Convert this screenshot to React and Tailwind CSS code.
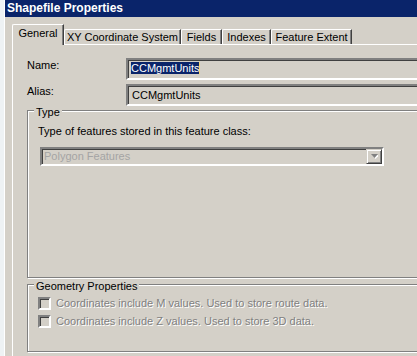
import React from "react";

const tabs = [
  { label: "XY Coordinate System", w: "w-[117px]" },
  { label: "Fields", w: "w-[41px]" },
  { label: "Indexes", w: "w-[49px]" },
  { label: "Feature Extent", w: "w-[81px]" },
];

const sunken =
  "border-2 border-t-[#808080] border-l-[#808080] border-b-white border-r-white shadow-[inset_1px_1px_0_#404040]";
const etched =
  "border border-[#808080] shadow-[inset_1px_1px_0_#ffffff,1px_1px_0_#ffffff]";
const disabledText = "text-[#808080] [text-shadow:1px_1px_0_#ffffff]";

const Tab = ({ label, w }) => (
  <div
    className={`${w} h-[16px] shrink-0 border-t border-l border-white border-r border-r-[#404040] shadow-[inset_-1px_0_0_#808080] rounded-tl-[2px] flex items-center justify-center pb-px`}
  >
    {label}
  </div>
);

const CheckRow = ({ children }) => (
  <div className="flex items-center h-[13px] gap-[5px]">
    <div className={`w-[13px] h-[13px] shrink-0 bg-[#d4d0c8] ${sunken}`} />
    <span className={`whitespace-nowrap ${disabledText}`}>{children}</span>
  </div>
);

const App = () => {
  return (
    <div className="w-[417px] h-[356px] overflow-hidden flex bg-[#d4d0c8] font-['Liberation_Sans',Arial,sans-serif] text-[11px] leading-[13px] text-black">
      <div className="w-[4px] shrink-0 bg-[#eef2f4]" />
      <div className="w-px shrink-0 bg-white" />
      <div className="flex-1 min-w-0 flex flex-col">
        <div className="h-[17px] shrink-0 bg-[#0a246a] text-white text-[12px] font-bold pl-[2px] flex items-center whitespace-nowrap">
          Shapefile Properties
        </div>

        <div className="flex-1 flex flex-col pl-[7px] pt-[8px]">
          {/* tab strip */}
          <div className="flex items-end h-[20px] shrink-0">
            <div className="relative z-10 w-[52px] h-[21px] shrink-0 bg-[#d4d0c8] border-t border-l border-white border-r border-r-[#404040] shadow-[inset_-1px_0_0_#808080] rounded-tl-[2px] flex justify-center pt-[2px]">
              General
            </div>
            {tabs.map((t) => (
              <Tab key={t.label} {...t} />
            ))}
          </div>

          {/* tab panel */}
          <div className="flex-1 -mt-px border-t border-l border-white pl-[14px] pt-[13px]">
            <div className="flex items-start">
              <div className="w-[99px] shrink-0 pt-px">Name:</div>
              <div className={`w-[320px] h-[22px] shrink-0 bg-[#d4d0c8] ${sunken} pl-[3px] pt-[2px] flex items-start`}>
                <span className="bg-[#0a246a] text-white leading-[12px] h-[12px] whitespace-nowrap">CCMgmtUnits</span>
                <span className="w-px h-[12px] bg-[#f2d27a]" />
              </div>
            </div>
            <div className="flex items-start mt-[4px]">
              <div className="w-[99px] shrink-0 pt-px">Alias:</div>
              <div className={`w-[320px] h-[22px] shrink-0 bg-[#d4d0c8] ${sunken} pl-[4px] pt-[3px] whitespace-nowrap`}>
                CCMgmtUnits
              </div>
            </div>

            {/* Type group */}
            <div className={`relative mt-[4px] w-[420px] h-[168px] ${etched} pl-[10px] pt-[14px]`}>
              <span className="absolute top-[-5px] left-[6px] px-[2px] bg-[#d4d0c8]">Type</span>
              <div className="whitespace-nowrap">Type of features stored in this feature class:</div>
              <div className={`mt-[9px] ml-[2px] w-[344px] h-[19px] bg-[#d4d0c8] ${sunken} flex items-start`}>
                <span className="flex-1 pl-[2px] pt-[1px] text-[#a4a4a4] whitespace-nowrap">Polygon Features</span>
                <div className="w-[16px] h-[15px] shrink-0 border border-t-[#d4d0c8] border-l-[#d4d0c8] border-b-[#404040] border-r-[#404040] shadow-[inset_1px_1px_0_#ffffff,inset_-1px_-1px_0_#808080] flex items-center justify-center">
                  <svg width="7" height="5" viewBox="0 0 7 5">
                    <path d="M1 1h7L4.5 5z" fill="#ffffff" />
                    <path d="M0 0h7L3.5 4z" fill="#808080" />
                  </svg>
                </div>
              </div>
            </div>

            {/* Geometry group */}
            <div className={`relative mt-[6px] w-[420px] h-[68px] ${etched} pl-[10px] pt-[12px] flex flex-col gap-[5px]`}>
              <span className="absolute top-[-5px] left-[6px] px-[2px] bg-[#d4d0c8] whitespace-nowrap">
                Geometry Properties
              </span>
              <CheckRow>Coordinates include M values. Used to store route data.</CheckRow>
              <CheckRow>Coordinates include Z values. Used to store 3D data.</CheckRow>
            </div>
          </div>
        </div>
      </div>
    </div>
  );
};

export default App;
